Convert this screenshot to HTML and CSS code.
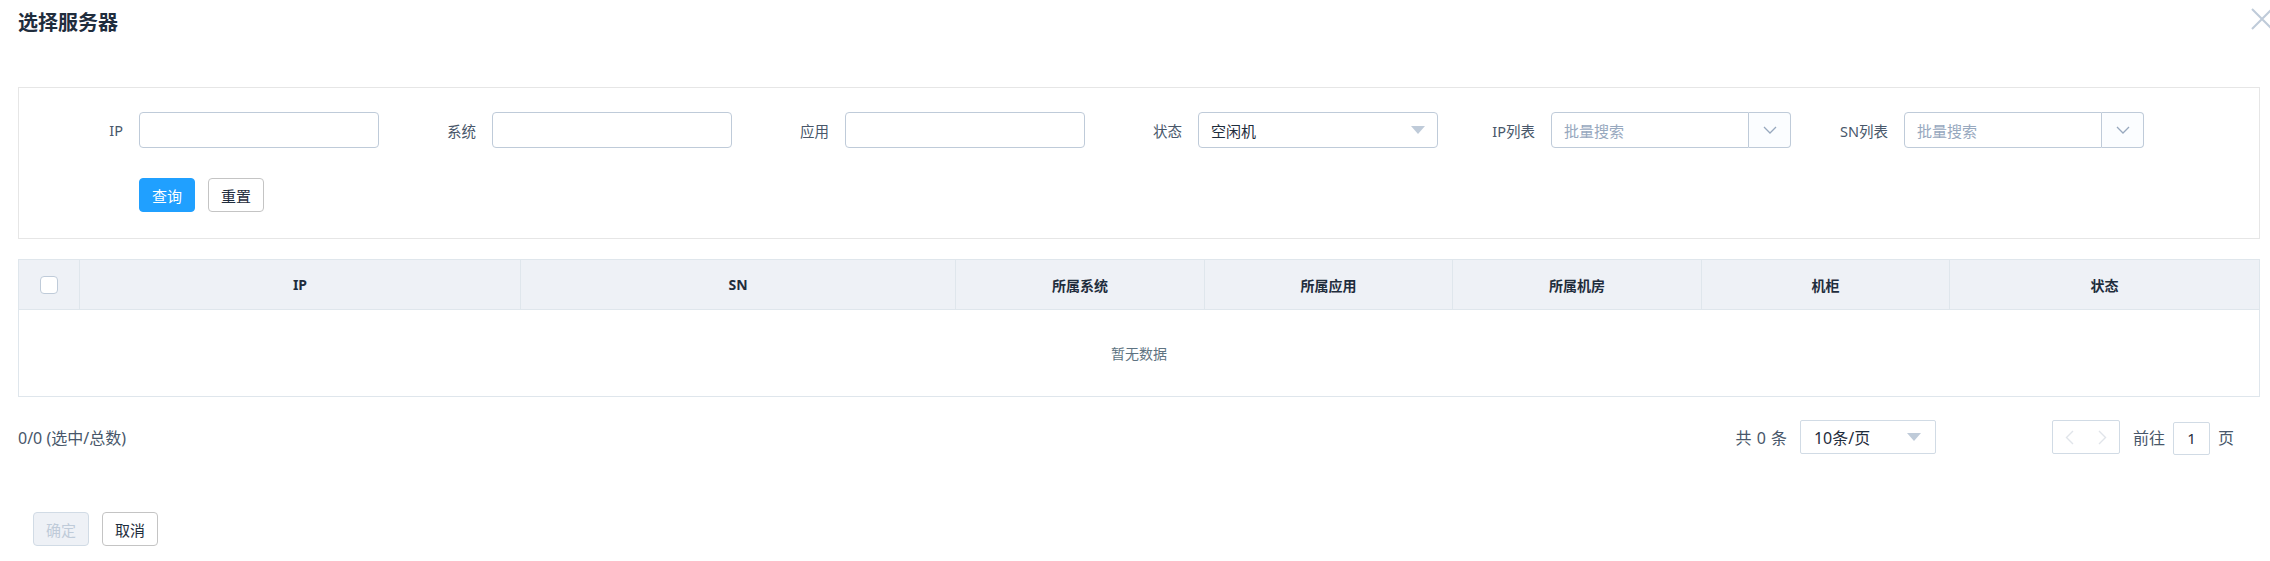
FILE: index.html
```html
<!DOCTYPE html>
<html lang="zh-CN">
<head>
<meta charset="utf-8">
<title>选择服务器</title>
<link rel="stylesheet" href="styles.css">
</head>
<body>
<div class="dialog">
  <div class="dialog-header">
    <span class="dialog-title">选择服务器</span>
    <button class="dialog-close" aria-label="关闭">
      <svg width="22" height="22" viewBox="0 0 22 22"><path d="M1 1 L21 21 M21 1 L1 21" stroke="#bfcbd9" stroke-width="2" fill="none"/></svg>
    </button>
  </div>

  <div class="dialog-body">
    <div class="search-panel">
      <div class="form-row">
        <div class="form-item">
          <label class="form-label">IP</label>
          <div class="input"></div>
        </div>
        <div class="form-item">
          <label class="form-label">系统</label>
          <div class="input"></div>
        </div>
        <div class="form-item">
          <label class="form-label">应用</label>
          <div class="input"></div>
        </div>
        <div class="form-item">
          <label class="form-label">状态</label>
          <div class="input select">
            <span class="select-value">空闲机</span>
            <span class="caret"></span>
          </div>
        </div>
        <div class="form-item">
          <label class="form-label">IP列表</label>
          <div class="input-group">
            <div class="input group-input"><span class="placeholder">批量搜索</span></div>
            <div class="group-append">
              <svg width="14" height="8" viewBox="0 0 14 8"><path d="M1 1 L7 7 L13 1" stroke="#97a8be" stroke-width="1.3" fill="none"/></svg>
            </div>
          </div>
        </div>
        <div class="form-item">
          <label class="form-label">SN列表</label>
          <div class="input-group">
            <div class="input group-input"><span class="placeholder">批量搜索</span></div>
            <div class="group-append">
              <svg width="14" height="8" viewBox="0 0 14 8"><path d="M1 1 L7 7 L13 1" stroke="#97a8be" stroke-width="1.3" fill="none"/></svg>
            </div>
          </div>
        </div>
      </div>
      <div class="form-actions">
        <button class="btn btn-primary">查询</button>
        <button class="btn">重置</button>
      </div>
    </div>

    <div class="table">
      <div class="table-head">
        <div class="th th-check"><span class="checkbox"></span></div>
        <div class="th">IP</div>
        <div class="th">SN</div>
        <div class="th">所属系统</div>
        <div class="th">所属应用</div>
        <div class="th">所属机房</div>
        <div class="th">机柜</div>
        <div class="th th-last">状态</div>
      </div>
      <div class="table-empty">暂无数据</div>
    </div>

    <div class="table-footer">
      <span class="selection-count">0/0 (选中/总数)</span>
      <div class="pagination">
        <span class="pg-total">共 0 条</span>
        <div class="pg-sizes">
          <span class="pg-sizes-value">10条/页</span>
          <span class="caret"></span>
        </div>
        <div class="pg-nav">
          <span class="pg-btn">
            <svg width="9" height="15" viewBox="0 0 9 15"><path d="M8 1 L1.5 7.5 L8 14" stroke="#e0e4ea" stroke-width="1.4" fill="none"/></svg>
          </span>
          <span class="pg-btn">
            <svg width="9" height="15" viewBox="0 0 9 15"><path d="M1 1 L7.5 7.5 L1 14" stroke="#e0e4ea" stroke-width="1.4" fill="none"/></svg>
          </span>
        </div>
        <span class="pg-jump-text">前往</span>
        <div class="pg-jump-input">1</div>
        <span class="pg-jump-text">页</span>
      </div>
    </div>
  </div>

  <div class="dialog-footer">
    <button class="btn btn-disabled">确定</button>
    <button class="btn">取消</button>
  </div>
</div>
</body>
</html>
```

FILE: styles.css
```css
html, body {
  margin: 0;
  padding: 0;
  overflow: hidden;
  background: #fff;
}

body {
  font-family: "Noto Sans", "Noto Sans CJK SC", sans-serif;
  color: #1f2d3d;
}

.dialog {
  position: relative;
  padding: 0 10px 0 18px;
}

.dialog-header {
  padding: 11px 0 52px;
}

.dialog-title {
  display: block;
  font-size: 20px;
  line-height: 24px;
  font-weight: 700;
  color: #1f2d3d;
}

.dialog-close {
  position: absolute;
  top: 8px;
  right: -3px;
  width: 22px;
  height: 22px;
  padding: 0;
  border: 0;
  background: none;
  display: block;
}

.dialog-close svg {
  display: block;
}

/* search panel */
.search-panel {
  border: 1px solid #e6e6e6;
  padding: 24px 20px 26px;
}

.form-row {
  display: flex;
  align-items: center;
  margin-bottom: 30px;
}

.form-item {
  display: flex;
  align-items: center;
  margin-right: 13px;
}

.form-label {
  box-sizing: border-box;
  width: 100px;
  padding-right: 16px;
  text-align: right;
  font-size: 14.5px;
  color: #48576a;
}

.input {
  box-sizing: border-box;
  width: 240px;
  height: 36px;
  border: 1px solid #bfcbd9;
  border-radius: 4px;
  background: #fff;
  display: flex;
  align-items: center;
  padding: 0 12px;
  font-size: 15px;
}

.select {
  justify-content: space-between;
  padding-right: 12px;
}

.select-value {
  color: #1f2d3d;
}

.caret {
  width: 0;
  height: 0;
  border-left: 7px solid transparent;
  border-right: 7px solid transparent;
  border-top: 8px solid #bfcbd9;
}

.input-group {
  display: flex;
  width: 240px;
}

.group-input {
  flex: 1;
  width: auto;
  border-radius: 4px 0 0 4px;
}

.placeholder {
  color: #97a8be;
}

.group-append {
  box-sizing: border-box;
  width: 42px;
  height: 36px;
  border: 1px solid #bfcbd9;
  border-left: 0;
  border-radius: 0 4px 4px 0;
  background: #fbfdff;
  display: flex;
  align-items: center;
  justify-content: center;
}

.group-append svg {
  display: block;
}

.form-actions {
  display: flex;
  padding-left: 100px;
}

/* buttons */
.btn {
  box-sizing: border-box;
  height: 34px;
  padding: 0 12px;
  border: 1px solid #c4c4c4;
  border-radius: 4px;
  background: #fff;
  color: #1f2d3d;
  font-family: inherit;
  font-size: 15px;
  margin-right: 13px;
}

.btn-primary {
  background: #20a0ff;
  border-color: #20a0ff;
  color: #fff;
}

.btn-disabled {
  background: #eef1f6;
  border-color: #d1dbe5;
  color: #bfcbd9;
}

/* table */
.table {
  margin-top: 20px;
  border: 1px solid #dfe6ec;
}

.table-head {
  display: grid;
  grid-template-columns: 61px 441px 435px 249px 248px 249px 248px 1fr;
  background: #eef1f6;
  border-bottom: 1px solid #dfe6ec;
}

.th {
  height: 49px;
  display: flex;
  align-items: center;
  justify-content: center;
  border-right: 1px solid #dfe6ec;
  font-size: 14px;
  font-weight: 700;
  color: #1f2d3d;
}

.th-last {
  border-right: 0;
}

.checkbox {
  box-sizing: border-box;
  width: 18px;
  height: 18px;
  border: 1px solid #bfcbd9;
  border-radius: 4px;
  background: #fff;
}

.table-empty {
  height: 86px;
  display: flex;
  align-items: center;
  justify-content: center;
  font-size: 14px;
  color: #5e7382;
}

/* footer row */
.table-footer {
  margin-top: 23px;
  height: 34px;
  display: flex;
  align-items: center;
  justify-content: space-between;
}

.selection-count {
  font-size: 16px;
  color: #48576a;
}

.pagination {
  display: flex;
  align-items: center;
  margin-right: 26px;
  color: #48576a;
}

.pg-total {
  font-size: 16px;
  word-spacing: 1px;
  margin-right: 13px;
}

.pg-sizes {
  box-sizing: border-box;
  width: 136px;
  height: 34px;
  border: 1px solid #d1dbe5;
  border-radius: 2px;
  display: flex;
  align-items: center;
  justify-content: space-between;
  padding: 0 14px 0 13px;
}

.pg-sizes-value {
  font-size: 16px;
  color: #1f2d3d;
}

.pg-nav {
  box-sizing: border-box;
  width: 68px;
  height: 34px;
  margin-left: 116px;
  border: 1px solid #d1dbe5;
  border-radius: 2px;
  display: flex;
}

.pg-btn {
  flex: 1;
  display: flex;
  align-items: center;
  justify-content: center;
}

.pg-btn svg {
  display: block;
}

.pg-jump-text {
  font-size: 16px;
  margin-left: 13px;
}

.pg-jump-text + .pg-jump-input {
  margin-left: 8px;
}

.pg-jump-input + .pg-jump-text {
  margin-left: 8px;
}

.pg-jump-input {
  box-sizing: border-box;
  width: 37px;
  height: 33px;
  margin-top: 2px;
  border: 1px solid #d1dbe5;
  border-radius: 2px;
  display: flex;
  align-items: center;
  justify-content: center;
  font-size: 15px;
  color: #1f2d3d;
}

/* dialog footer */
.dialog-footer {
  display: flex;
  margin-top: 58px;
  padding-left: 15px;
}
```
